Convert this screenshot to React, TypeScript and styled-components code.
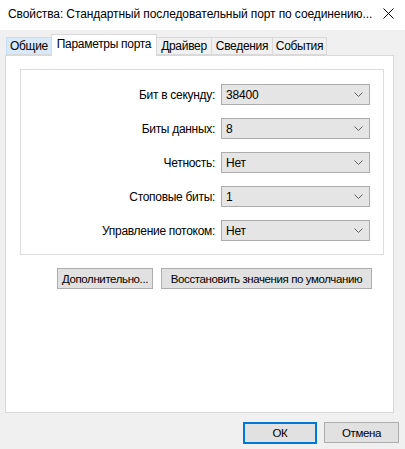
import React from 'react'
import styled, { createGlobalStyle } from 'styled-components'

const GlobalStyle = createGlobalStyle`
  html, body {
    margin: 0;
    padding: 0;
    background: #f0f0f0;
  }
  body {
    font-family: 'Liberation Sans', Arial, sans-serif;
    font-size: 12px;
    color: #000;
  }
`

const Window = styled.div`
  width: 405px;
  height: 449px;
  background: #f0f0f0;
  display: flex;
  flex-direction: column;
  overflow: hidden;
`

const TitleBar = styled.div`
  height: 30px;
  background: #fff;
  display: flex;
  align-items: center;
  justify-content: space-between;
  padding: 0 11px 3px 8px;
  box-sizing: border-box;
  flex-shrink: 0;
`

const Title = styled.span`
  font-size: 12px;
  white-space: nowrap;
  letter-spacing: -0.1px;
`

const CloseIcon = styled.svg`
  width: 11px;
  height: 11px;
`

const Body = styled.div`
  padding: 3px 0 0 5px;
  display: flex;
  flex-direction: column;
`

const TabStrip = styled.div`
  display: flex;
  align-items: flex-end;
  height: 22px;
  padding-left: 2px;
  position: relative;
  z-index: 1;
`

const Tab = styled.div<{ w: number; active?: boolean; hover?: boolean }>`
  width: ${({ w }) => w}px;
  height: ${({ active }) => (active ? 22 : 18)}px;
  box-sizing: border-box;
  display: flex;
  align-items: center;
  justify-content: center;
  border: 1px solid ${({ hover }) => (hover ? '#c4dff5' : '#d9d9d9')};
  border-bottom: ${({ active }) => (active ? 'none' : '1px solid #d9d9d9')};
  margin-left: -1px;
  background: ${({ active, hover }) =>
    active ? '#fff' : hover ? '#d8eaf9' : '#f0f0f0'};
  padding-bottom: ${({ active }) => (active ? 3 : 0)}px;
  white-space: nowrap;
  letter-spacing: -0.3px;
  margin-bottom: ${({ active }) => (active ? -1 : 0)}px;
`

const Panel = styled.div`
  height: 358px;
  margin-right: 11px;
  box-sizing: border-box;
  background: #fff;
  border: 1px solid #d9d9d9;
  padding: 13px 9px 0 14px;
`

const Group = styled.div`
  height: 186px;
  box-sizing: border-box;
  border: 1px solid #dcdcdc;
  padding: 14px 13px 0 0;
  display: grid;
  grid-template-columns: 1fr 149px;
  grid-auto-rows: 21px;
  column-gap: 6px;
  row-gap: 13px;
  align-items: center;
`

const Label = styled.span`
  text-align: right;
  white-space: nowrap;
  letter-spacing: -0.3px;
`

const Combo = styled.div`
  height: 21px;
  box-sizing: border-box;
  background: #e5e5e5;
  border: 1px solid #acacac;
  display: flex;
  align-items: center;
  justify-content: space-between;
  padding: 0 6px 0 4px;
  letter-spacing: -0.2px;
`

const Chevron = styled.svg`
  width: 9px;
  height: 5px;
`

const ActionRow = styled.div`
  display: flex;
  gap: 8px;
  padding: 13px 0 0 37px;
`

const Button = styled.button<{ w: number; primary?: boolean }>`
  width: ${({ w }) => w}px;
  height: ${({ primary }) => (primary ? 22 : 21)}px;
  box-sizing: border-box;
  background: #e1e1e1;
  border: ${({ primary }) => (primary ? '2px solid #0078d7' : '1px solid #adadad')};
  font-family: 'Liberation Sans', Arial, sans-serif;
  font-size: 11.5px;
  letter-spacing: -0.4px;
  color: #000;
  padding: 0;
  white-space: nowrap;
`

const Footer = styled.div`
  display: flex;
  justify-content: flex-end;
  gap: 7px;
  padding: 9px 6px 0 0;
`

const settings = [
  { label: 'Бит в секунду:', value: '38400' },
  { label: 'Биты данных:', value: '8' },
  { label: 'Четность:', value: 'Нет' },
  { label: 'Стоповые биты:', value: '1' },
  { label: 'Управление потоком:', value: 'Нет' },
]

const tabs = [
  { name: 'Общие', w: 46, hover: true },
  { name: 'Параметры порта', w: 106, active: true },
  { name: 'Драйвер', w: 56 },
  { name: 'Сведения', w: 62 },
  { name: 'События', w: 55 },
]

export default function App() {
  return (
    <Window>
      <GlobalStyle />
      <TitleBar>
        <Title>Свойства: Стандартный последовательный порт по соединению...</Title>
        <CloseIcon viewBox="0 0 11 11">
          <path d="M0.5 0.5 L10.5 10.5 M10.5 0.5 L0.5 10.5" stroke="#000" strokeWidth="1" fill="none" />
        </CloseIcon>
      </TitleBar>
      <Body>
        <TabStrip>
          {tabs.map((t) => (
            <Tab key={t.name} w={t.w} active={t.active} hover={t.hover}>
              {t.name}
            </Tab>
          ))}
        </TabStrip>
        <Panel>
          <Group>
            {settings.map((s) => (
              <React.Fragment key={s.label}>
                <Label>{s.label}</Label>
                <Combo>
                  <span>{s.value}</span>
                  <Chevron viewBox="0 0 9 5">
                    <path d="M0.5 0.5 L4.5 4.5 L8.5 0.5" stroke="#606060" strokeWidth="1" fill="none" />
                  </Chevron>
                </Combo>
              </React.Fragment>
            ))}
          </Group>
          <ActionRow>
            <Button w={96}>Дополнительно...</Button>
            <Button w={211}>Восстановить значения по умолчанию</Button>
          </ActionRow>
        </Panel>
        <Footer>
          <Button w={74} primary>
            ОК
          </Button>
          <Button w={75}>Отмена</Button>
        </Footer>
      </Body>
    </Window>
  )
}
